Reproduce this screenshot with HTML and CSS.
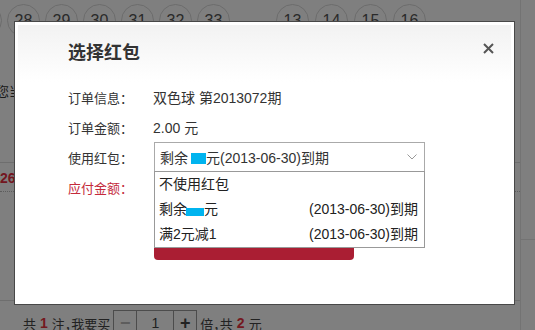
FILE: index.html
```html
<!DOCTYPE html>
<html lang="zh-CN">

<head>
    <meta charset="UTF-8">
    <meta name="viewport" content="width=device-width, initial-scale=1.0">
    <title>选择红包</title>
    <link rel="stylesheet" href="styles.css">
</head>

<body>
    <!-- page under the mask -->
    <div class="page">
        <div class="main">
            <div class="balls">
                <span class="ball">27</span>
                <span class="ball">28</span>
                <span class="ball">29</span>
                <span class="ball">30</span>
                <span class="ball">31</span>
                <span class="ball">32</span>
                <span class="ball">33</span>
                <span class="ball blue">13</span>
                <span class="ball blue">14</span>
                <span class="ball blue">15</span>
                <span class="ball blue">16</span>
            </div>
            <p class="notice">您当</p>
            <div class="sep"></div>
            <div class="count">26</div>
            <div class="sep sep-low"></div>
            <div class="buybar">
                <span>共</span><b>1</b><span>注，我要买</span>
                <div class="qty">
                    <span class="qty-btn minus">−</span>
                    <span class="qty-num">1</span>
                    <span class="qty-btn plus">+</span>
                </div>
                <span>倍，共</span><b>2</b><span>元</span>
            </div>
        </div>
        <div class="aside"></div>
    </div>

    <div class="mask"></div>

    <!-- dialog -->
    <div class="dialog">
        <div class="dialog-head">
            <h3 class="dialog-title">选择红包</h3>
            <button class="dialog-close">
                <svg width="11" height="11" viewBox="0 0 11 11">
                    <path d="M1 1L10 10M10 1L1 10" stroke="#555" stroke-width="2" />
                </svg>
            </button>
        </div>
        <div class="dialog-body">
            <div class="row">
                <span class="label">订单信息：</span>
                <span class="value">双色球 第2013072期</span>
            </div>
            <div class="row">
                <span class="label">订单金额：</span>
                <span class="value">2.00 元</span>
            </div>
            <div class="row">
                <span class="label">使用红包：</span>
                <div class="select">
                    <span class="select-text">剩余<i class="amt"></i>元(2013-06-30)到期</span>
                    <svg class="chevron" width="10" height="6" viewBox="0 0 10 6">
                        <path d="M0.5 0.5L5 5L9.5 0.5" fill="none" stroke="#999" stroke-width="1" />
                    </svg>
                    <ul class="options">
                        <li>不使用红包</li>
                        <li><span>剩余<i class="amt amt-sm"></i>元</span><span>(2013-06-30)到期</span></li>
                        <li><span>满2元减1</span><span>(2013-06-30)到期</span></li>
                    </ul>
                </div>
            </div>
            <div class="row pay">
                <span class="label">应付金额：</span>
            </div>
            <button class="confirm">确认支付</button>
        </div>
    </div>
</body>

</html>
```

FILE: styles.css
```css
* {
    box-sizing: border-box;
}

body {
    margin: 0;
    font-family: "Liberation Sans", "Noto Sans CJK SC", sans-serif;
    color: #333;
    background: #fff;
    overflow: hidden;
}

/* page under the mask */

.page {
    display: flex;
    height: 330px;
}

.main {
    width: 521px;
    flex: none;
    border-right: 1px solid #e6e6e6;
    overflow: hidden;
}

.aside {
    flex: 1;
    height: 240px;
    border-bottom: 1px solid #e6e6e6;
}

.balls {
    display: flex;
    padding-top: 4px;
    margin-left: -31px;
}

.ball {
    flex: none;
    width: 33px;
    height: 33px;
    margin-right: 5px;
    border: 1px solid #d8d8d8;
    border-radius: 50%;
    font-size: 16px;
    line-height: 31px;
    text-align: center;
    color: #555;
}

.ball.blue {
    margin-right: 6px;
}

.ball.blue:nth-child(8) {
    margin-left: 41px;
}

.notice {
    margin: 45px 0 0 -4px;
    font-size: 13px;
    line-height: 20px;
    white-space: nowrap;
}

.sep {
    margin-top: 60px;
    border-top: 1px solid #ddd;
}

.count {
    padding: 5px 0 3px;
    font-size: 14px;
    line-height: 20px;
    font-weight: bold;
    color: #e62d3e;
    border-bottom: 1px dotted #bbb;
}

.sep-low {
    margin-top: 108px;
}

.buybar {
    display: flex;
    align-items: center;
    height: 26px;
    margin-top: 9px;
    padding-left: 23px;
    font-size: 13px;
    color: #444;
    font-feature-settings: "halt";
}

.buybar b {
    margin: 0 4px;
    font-size: 14px;
    color: #e8323f;
}

.qty {
    display: flex;
    height: 26px;
    margin: 0 3px 0 3px;
    border: 1px solid #999;
}

.qty-btn,
.qty-num {
    display: flex;
    align-items: center;
    justify-content: center;
}

.qty-btn {
    width: 22px;
    font-size: 18px;
    font-weight: bold;
}

.minus {
    color: #bbb;
}

.qty-num {
    width: 38px;
    border-left: 1px solid #999;
    border-right: 1px solid #999;
    font-size: 14px;
}

.mask {
    position: fixed;
    inset: 0;
    background: rgba(0, 0, 0, .5);
}

/* dialog */

.dialog {
    position: absolute;
    left: 14px;
    top: 21px;
    width: 501px;
    height: 284px;
    padding: 3px;
    background: #fff;
    border: 1px solid #484848;
}

.dialog-head {
    display: flex;
    justify-content: space-between;
    height: 57px;
    padding: 0 17px 0 50px;
    background: linear-gradient(#f2f2f2, #fff);
}

.dialog-title {
    margin: 18px 0 0;
    font-size: 18px;
    line-height: 20px;
    font-weight: bold;
    color: #333;
}

.dialog-close {
    width: 11px;
    height: 11px;
    margin-top: 18px;
    padding: 0;
    border: 0;
    background: none;
    cursor: pointer;
}

.dialog-close svg {
    display: block;
}

.dialog-body {
    padding-left: 50px;
}

.row {
    display: flex;
    align-items: center;
    height: 30px;
}

.label {
    width: 86px;
    flex: none;
    font-size: 13px;
}

.value {
    font-size: 14px;
    margin-left: -1px;
}

.pay .label {
    color: #c42a3b;
}

.select {
    position: relative;
    display: flex;
    align-items: center;
    justify-content: space-between;
    width: 271px;
    height: 30px;
    padding: 0 7px 0 5px;
    border: 1px solid #aaa;
    font-size: 14px;
}

.amt {
    display: inline-block;
    width: 15px;
    height: 11px;
    margin-left: 3px;
    vertical-align: -1px;
    background: #00b4ef;
}

.amt-sm {
    width: 18px;
    height: 8px;
    margin-left: -1px;
    vertical-align: -2px;
}

.options {
    position: absolute;
    left: -1px;
    top: 28px;
    width: 271px;
    margin: 0;
    padding: 0;
    list-style: none;
    background: #fff;
    border: 1px solid #999;
    z-index: 2;
}

.options li {
    display: flex;
    justify-content: space-between;
    height: 25px;
    padding: 0 6px 0 4px;
    line-height: 25px;
    font-size: 14px;
    color: #222;
}

.confirm {
    display: block;
    width: 200px;
    height: 38px;
    margin: 20px 0 0 86px;
    padding: 0 0 16px;
    border: 0;
    border-radius: 4px;
    background: #aa1e33;
    color: #fff;
    font: bold 15px "Liberation Sans", "Noto Sans CJK SC", sans-serif;
}
```
